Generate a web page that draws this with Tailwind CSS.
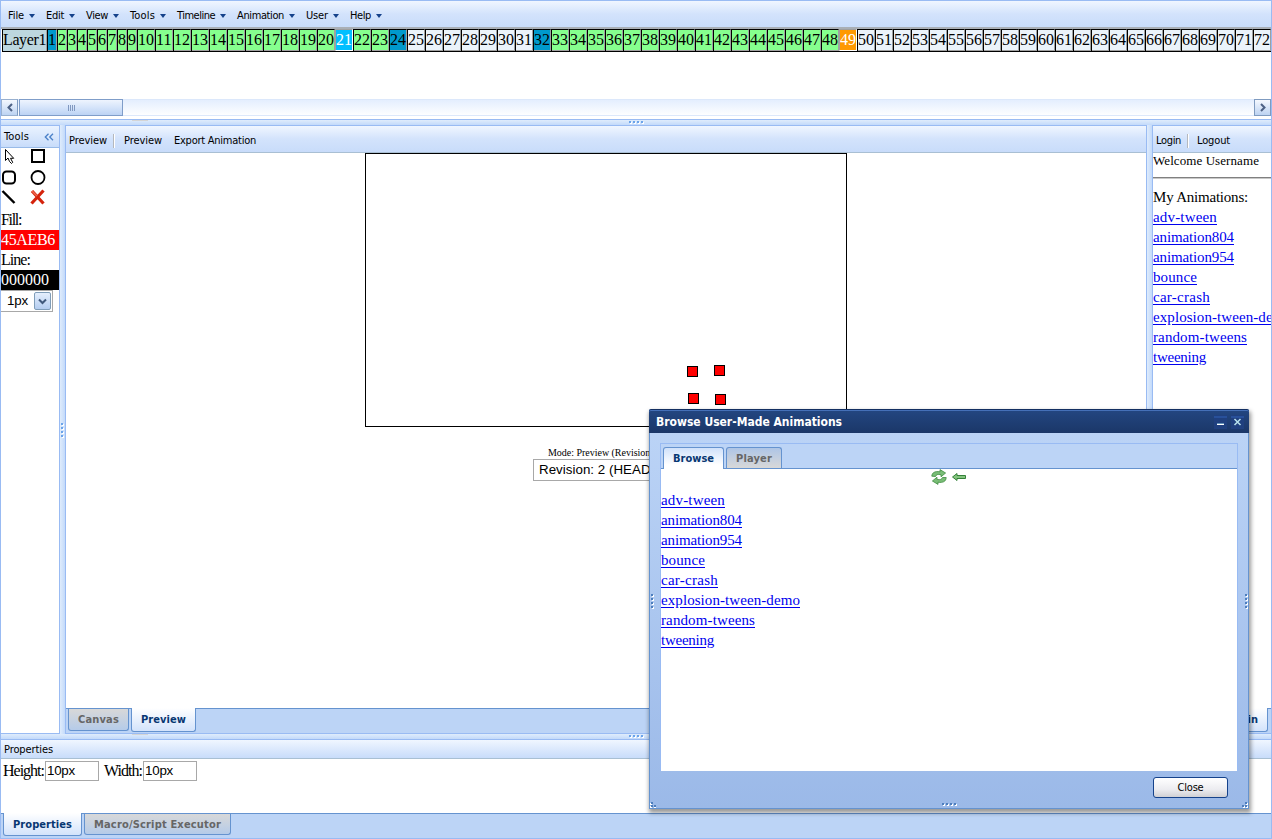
<!DOCTYPE html>
<html lang="en">
<head>
<meta charset="utf-8">
<title>Animation Editor</title>
<script src="https://cdn.jsdelivr.net/npm/@tailwindcss/browser@4"></script>
</head>
<body class="relative h-[839px] w-[1272px] overflow-hidden bg-white font-['DejaVu_Sans_Condensed','DejaVu_Sans',sans-serif] text-[11px] leading-[14px] text-black">
<div class="flex h-full flex-col border-x border-[#99bbf3]">

  <!-- Menu bar -->
  <nav class="flex h-[27px] shrink-0 items-center border-t border-[#99bbf3] bg-gradient-to-b from-[#f0f6ff] via-[#d3e3fc] via-50% to-[#c8dcfa] pt-[3px] pl-[7px]">
    <div class="flex w-[38px] items-center justify-between"><span data-w="16">File</span><i class="mr-[11px] border-x-3 border-t-4 border-x-transparent border-t-[#15428b]"></i></div>
    <div class="flex w-10 items-center justify-between"><span data-w="18">Edit</span><i class="mr-[11px] border-x-3 border-t-4 border-x-transparent border-t-[#15428b]"></i></div>
    <div class="flex w-11 items-center justify-between"><span data-w="22">View</span><i class="mr-[11px] border-x-3 border-t-4 border-x-transparent border-t-[#15428b]"></i></div>
    <div class="flex w-[47px] items-center justify-between"><span data-w="25">Tools</span><i class="mr-[11px] border-x-3 border-t-4 border-x-transparent border-t-[#15428b]"></i></div>
    <div class="flex w-[60px] items-center justify-between"><span data-w="38">Timeline</span><i class="mr-[11px] border-x-3 border-t-4 border-x-transparent border-t-[#15428b]"></i></div>
    <div class="flex w-[69px] items-center justify-between"><span data-w="47">Animation</span><i class="mr-[11px] border-x-3 border-t-4 border-x-transparent border-t-[#15428b]"></i></div>
    <div class="flex w-11 items-center justify-between"><span data-w="22">User</span><i class="mr-[11px] border-x-3 border-t-4 border-x-transparent border-t-[#15428b]"></i></div>
    <div class="flex w-[43px] items-center justify-between"><span data-w="21">Help</span><i class="mr-[11px] border-x-3 border-t-4 border-x-transparent border-t-[#15428b]"></i></div>
  </nav>

  <!-- Timeline -->
  <section class="flex h-[92px] shrink-0 flex-col justify-between border-t-2 border-[#a9afb6] bg-white pb-[3px]">
    <div id="frames" class="ml-px flex h-[23px] w-[1269px] overflow-hidden border-b border-black font-['Liberation_Serif',serif] text-[16px] leading-[20px]">
      <div class="w-[45px] shrink-0 border-t border-r border-l border-t-black border-r-[#a0a0a0] border-l-black bg-[#bdd7df]"><span data-w="43">Layer1</span></div>
    </div>
    <div class="flex h-[17px] justify-between border-y border-[#dce8fb] bg-gradient-to-b from-[#e4eefe] to-[#fdfeff]">
      <div class="flex">
        <div class="-my-px flex h-[17px] w-[17px] items-center justify-center border border-[#98b0d0] border-r-[#7f9bc0] bg-gradient-to-b from-[#f4f8fe] to-[#bdd3f2]"><svg width="8" height="9" viewBox="0 0 8 9"><path d="M6 1 2.5 4.5 6 8" fill="none" stroke="#4d6185" stroke-width="2"/></svg></div>
        <div class="-my-px ml-px flex h-[17px] w-[104px] items-center justify-center gap-px border border-[#7f9dc9] bg-gradient-to-b from-[#eef4fe] via-[#d5e4fa] to-[#bcd3f4]">
          <i class="h-[6px] w-px bg-[#8098c0]"></i><i class="h-[6px] w-px bg-[#8098c0]"></i><i class="h-[6px] w-px bg-[#8098c0]"></i><i class="h-[6px] w-px bg-[#8098c0]"></i>
        </div>
      </div>
      <div class="-my-px flex h-[17px] w-[17px] items-center justify-center border border-[#7f9bc0] bg-gradient-to-b from-[#f4f8fe] to-[#bdd3f2]"><svg width="8" height="9" viewBox="0 0 8 9"><path d="M2 1 5.5 4.5 2 8" fill="none" stroke="#4d6185" stroke-width="2"/></svg></div>
    </div>
  </section>

  <!-- Horizontal splitter -->
  <div class="flex h-[6px] shrink-0 border-t border-[#99bbf3] bg-gradient-to-b from-[#dfecfc] to-[#c3dafa]">
    <i class="ml-[131px] h-px w-4 bg-[#d5d5d5]"></i>
    <svg class="ml-[480px]" width="16" height="5" viewBox="0 0 16 5"><g fill="#fff"><path d="M2 2h2v2h-2zM6 2h2v2h-2zM10 2h2v2h-2zM14 2h2v2h-2z"/></g><g fill="#6ba4ea"><path d="M1 1h2v2h-2zM5 1h2v2h-2zM9 1h2v2h-2zM13 1h2v2h-2z"/></g></svg>
  </div>

  <main class="flex h-[609px] shrink-0">
    <!-- Tool palette -->
    <aside class="w-[59px] shrink-0 border-y border-r border-[#99bbf3]">
      <header class="flex h-[22px] items-center justify-between border-b border-[#99bbe8] bg-gradient-to-b from-[#eaf3ff] to-[#c8dcfa] pr-[5px] pl-[3px]"><span data-w="25">Tools</span><svg width="10" height="8" viewBox="0 0 10 8" fill="none" stroke="#4a80c8" stroke-width="1.3"><path d="M4.5.8 1.3 4l3.2 3.2M9 .8 5.8 4 9 7.2"/></svg></header>
      <div class="grid h-[62px] grid-cols-2 grid-rows-3">
        <svg width="18" height="20" viewBox="1 148 18 20"><path d="M5.5 149.5v11l2.5-2.5 1.5 3.5 2 2 1.2-1.2-2.2-4h3.2z" fill="#fff" stroke="#000"/></svg>
        <svg width="18" height="20" viewBox="30 148 18 20"><path d="M32 150h12v12h-12z" fill="#fff" stroke="#000" stroke-width="2"/></svg>
        <svg width="18" height="20" viewBox="1 168.500 18 20"><rect x="3" y="171" width="12" height="12" rx="3.500" fill="#fff" stroke="#000" stroke-width="2"/></svg>
        <svg width="18" height="20" viewBox="30 168.500 18 20"><circle cx="38" cy="177" r="6.500" fill="#fff" stroke="#000" stroke-width="1.800"/></svg>
        <svg width="18" height="20" viewBox="1 189 18 20"><path d="m2.500 191 12 12" stroke="#000" stroke-width="2.400"/></svg>
        <svg width="18" height="20" viewBox="30 189 18 20"><path d="m32 191 11.500 12.500M43.500 190.500 31.500 203.500" stroke="#d4230c" stroke-width="3.200"/><path d="m32 191 5 5" stroke="#ef6a50" stroke-width="1.500"/></svg>
      </div>
      <div class="font-['Liberation_Serif',serif] text-[16px] leading-5">
        <div><span data-w="20">Fill:</span></div>
        <div class="bg-[#ff0000] text-white"><span data-w="54">45AEB6</span></div>
        <div><span data-w="29">Line:</span></div>
        <div class="bg-black text-white"><span data-w="48">000000</span></div>
      </div>
      <div class="flex h-[22px] w-[52px] items-center justify-between border border-l-0 border-[#a8a8a8] pr-px pl-[6px] font-['Liberation_Sans',sans-serif] text-[13.330px]"><span data-w="21">1px</span><div class="flex h-[18px] w-[17px] items-center justify-center rounded-xs border border-[#7f9db9] bg-gradient-to-b from-[#e5effd] to-[#b4cdf0]"><svg width="9" height="7" viewBox="0 0 9 7"><path d="m1 1.500 3.500 3.500L8 1.500" fill="none" stroke="#40597c" stroke-width="2"/></svg></div></div>
    </aside>

    <div class="flex w-[5px] shrink-0 items-center bg-gradient-to-r from-[#dfecfc] to-[#c3dafa]"><svg width="5" height="16" viewBox="0 0 5 16"><path fill="#fff" d="M2 2h2v2h-2zM2 6h2v2h-2zM2 10h2v2h-2zM2 14h2v2h-2z"/><path fill="#6ba4ea" d="M1 1h2v2h-2zM1 5h2v2h-2zM1 9h2v2h-2zM1 13h2v2h-2z"/></svg></div>

    <!-- Stage -->
    <section class="flex w-[1082px] shrink-0 flex-col border border-[#99bbf3]">
      <div class="flex h-[27px] shrink-0 items-center border-b border-[#a9bfd3] bg-gradient-to-b from-[#f0f6ff] via-[#d3e3fc] via-50% to-[#c8dcfa] pt-[3px] pl-[3px]">
        <span data-w="38">Preview</span><i class="mr-[9px] ml-[6px] h-[14px] w-[2px] border-r border-l border-l-[#b5b8bd] border-r-white"></i><span data-w="38">Preview</span><span class="ml-3" data-w="82">Export Animation</span>
      </div>
      <div class="h-[555px] bg-white">
        <div class="relative ml-[299px] h-[274px] w-[482px] border border-black">
          <i class="absolute top-[212px] left-[321px] size-[11px] border border-black bg-[#ff0000]"></i>
          <i class="absolute top-[211px] left-[348px] size-[11px] border border-black bg-[#ff0000]"></i>
          <i class="absolute top-[239px] left-[322px] size-[11px] border border-black bg-[#ff0000]"></i>
          <i class="absolute top-[240px] left-[349px] size-[11px] border border-black bg-[#ff0000]"></i>
        </div>
        <p class="mt-5 ml-[482px] font-['Liberation_Serif',serif] text-[10px] leading-3 whitespace-nowrap"><span data-w="113">Mode: Preview (Revision 2)</span></p>
        <div class="ml-[467px] h-[22px] w-[148px] border border-[#a8a8a8] pl-[5px] font-['Liberation_Sans',sans-serif] text-[13.330px] leading-5 whitespace-nowrap"><span data-w="116">Revision: 2 (HEAD)</span></div>
      </div>
      <div class="flex h-[25px] border-t border-[#6593cf] bg-[#bcd4f6] pl-[2px] text-[11px] font-bold">
        <div class="h-[22px] w-[61px] rounded-b-[3px] border border-t-0 border-[#6593cf] bg-gradient-to-b from-[#d8d8d8] to-[#b5cbe9] pt-1 text-center text-[#666]"><span data-w="41">Canvas</span></div>
        <div class="-mt-px ml-[2px] h-6 w-[65px] rounded-b-[3px] border border-t-0 border-[#6593cf] bg-gradient-to-b from-white to-[#d3e3fb] pt-[5px] text-center text-[#083772]"><span data-w="45">Preview</span></div>
      </div>
    </section>

    <div class="w-[5px] shrink-0 bg-gradient-to-r from-[#dfecfc] to-[#c3dafa]"></div>

    <!-- Account panel -->
    <aside class="flex w-[119px] shrink-0 flex-col overflow-hidden border-y border-l border-[#99bbf3]">
      <div class="flex h-[27px] shrink-0 items-center border-b border-[#a9bfd3] bg-gradient-to-b from-[#f0f6ff] via-[#d3e3fc] via-50% to-[#c8dcfa] pt-[3px] pl-[3px]"><span data-w="25">Login</span><i class="mr-[8px] ml-[6px] h-[14px] w-[2px] border-r border-l border-l-[#b5b8bd] border-r-white"></i><span data-w="33">Logout</span></div>
      <div class="h-[555px] font-['Liberation_Serif',serif] text-[15px] leading-5 whitespace-nowrap">
        <p class="h-6 text-[13px] leading-[15px]"><span data-w="106">Welcome Username</span></p>
        <hr class="mb-[8px] h-[2px] border-t border-b border-t-[#808080] border-b-[#c8c8c8]">
        <p><span data-w="95">My Animations:</span></p>
        <div class="flex flex-col items-start text-[#0000ee] underline-offset-2 [&>a]:underline">
          <a data-w="64">adv-tween</a><a data-w="81">animation804</a><a data-w="81">animation954</a><a data-w="44">bounce</a><a data-w="57">car-crash</a><a data-w="139">explosion-tween-demo</a><a data-w="94">random-tweens</a><a data-w="53">tweening</a>
        </div>
      </div>
      <div class="flex h-[25px] border-t border-[#6593cf] bg-[#bcd4f6] pl-[60px] font-bold"><div class="-mt-px h-6 w-[55px] rounded-b-[3px] border border-t-0 border-[#6593cf] bg-gradient-to-b from-white to-[#d3e3fb] pt-[5px] pr-[9px] text-right text-[#083772]">Main</div></div>
    </aside>
  </main>

  <!-- Horizontal splitter -->
  <div class="flex h-[5px] shrink-0 bg-gradient-to-b from-[#dfecfc] to-[#c3dafa]">
    <i class="ml-[131px] h-px w-4 bg-[#d5d5d5]"></i>
    <svg class="ml-[480px]" width="16" height="5" viewBox="0 0 16 5"><path fill="#fff" d="M2 2h2v2h-2zM6 2h2v2h-2zM10 2h2v2h-2zM14 2h2v2h-2z"/><path fill="#6ba4ea" d="M1 1h2v2h-2zM5 1h2v2h-2zM9 1h2v2h-2zM13 1h2v2h-2z"/></svg>
  </div>

  <!-- Properties -->
  <section class="flex h-[100px] shrink-0 flex-col border-y border-[#99bbf3]">
    <header class="h-[19px] shrink-0 border-b border-[#a9bfd3] bg-gradient-to-b from-[#f0f6ff] to-[#c8dcfa] pt-[3px] pl-[3px]"><span data-w="49">Properties</span></header>
    <div class="flex h-[54px] items-start pt-[2px] pl-[2px] font-['Liberation_Serif',serif] text-[16px] leading-5">
      <span data-w="41">Height:</span><div class="ml-px h-5 w-[54px] border border-[#a8a8a8] pl-px font-['Liberation_Sans',sans-serif] text-[13.330px] leading-[18px]"><span data-w="28">10px</span></div>
      <span class="ml-[5px]" data-w="38">Width:</span><div class="ml-px h-5 w-[54px] border border-[#a8a8a8] pl-px font-['Liberation_Sans',sans-serif] text-[13.330px] leading-[18px]"><span data-w="28">10px</span></div>
    </div>
    <div class="flex h-[25px] border-t border-[#6593cf] bg-[#bcd4f6] pl-[2px] font-bold">
      <div class="-mt-px h-[23px] w-[79px] rounded-b-[3px] border border-t-0 border-[#6593cf] bg-gradient-to-b from-white to-[#d3e3fb] pt-[5px] text-center text-[#083772]"><span data-w="59">Properties</span></div>
      <div class="ml-[2px] h-[21px] w-[147px] rounded-b-[3px] border border-t-0 border-[#6593cf] bg-gradient-to-b from-[#d8d8d8] to-[#b5cbe9] pt-1 text-center text-[#666]"><span data-w="127">Macro/Script Executor</span></div>
    </div>
  </section>
</div>

<!-- Browse dialog -->
<div class="absolute top-[409px] left-[649px] flex h-[400px] w-[600px] flex-col rounded-t-[2px] border border-t-0 border-[#6593cf] bg-gradient-to-b from-[#bdd5f7] to-[#9bb9e8] shadow-[1px_3px_4px_1px_rgba(0,0,0,0.4)]">
  <header class="-mx-px flex h-6 shrink-0 items-center justify-between rounded-t-[2px] border-t border-[#132f61] bg-gradient-to-b from-[#234681] to-[#1b3768] pr-[5px] pl-[7px] shadow-[inset_0_1px_0_#4570b8]">
    <b class="text-[12px] text-white" data-w="186">Browse User-Made Animations</b>
    <div class="flex gap-1">
      <svg width="13" height="14" viewBox="0 0 13 14"><path fill="#20407f" d="M0 0h13v14H0z"/><path fill="#28509a" d="M0 1h13v2H0z"/><path fill="#fff" d="M3 8h7v2H3z"/><path fill="#6593b8" d="M3 8h7v1H3z"/></svg>
      <svg width="13" height="14" viewBox="0 0 13 14"><path fill="#20407f" d="M0 0h13v14H0z"/><path fill="#28509a" d="M0 1h13v2H0z"/><path d="m3.500 4 6 6m0-6-6 6" stroke="#b9e3ee" stroke-width="1.500"/></svg>
    </div>
  </header>
  <div class="mx-[10px] mt-[10px] flex h-[328px] shrink-0 flex-col border-x border-t border-[#99bbf3]">
    <div class="flex h-[25px] shrink-0 items-end border-b border-[#6593cf] bg-[#bcd4f6] pl-[2px] font-bold">
      <div class="-mb-px h-[22px] w-[61px] rounded-t-[3px] border border-b-0 border-[#6593cf] bg-gradient-to-b from-[#d0e1fa] to-white to-80% pt-1 text-center text-[#083772]"><span data-w="41">Browse</span></div>
      <div class="ml-[2px] h-[21px] w-[56px] rounded-t-[3px] border border-b-0 border-[#6593cf] bg-gradient-to-b from-[#aec5e6] to-[#d8d8d8] pt-1 text-center text-[#666]"><span data-w="36">Player</span></div>
    </div>
    <div class="grow bg-white">
      <div class="flex h-[21px] justify-center gap-1 pr-[1px]">
        <svg width="16" height="16" viewBox="0 0 16 16" stroke="#3f8b40" stroke-width=".8" fill="#79bd76"><path d="M.8 7.200C1 3.500 4 2 9 2.800V.6L14.600 4 10 7.800V5.700C6.500 5 5.500 5.500 4.500 7.500z"/><path d="M15.200 8.500C15 12.500 12 14 7 13.200v2.200L1.400 12 6 8.200v2.200c3.500.6 4.500.1 5.500-1.900z"/></svg>
        <svg width="16" height="16" viewBox="0 0 16 16"><path d="M1.500 8 6 4.500v2h8.500v3H6v2z" fill="#84c47e" stroke="#35813a"/></svg>
      </div>
      <div class="flex flex-col items-start font-['Liberation_Serif',serif] text-[15px] leading-5 text-[#0000ee] underline-offset-2 [&>a]:underline">
        <a data-w="64">adv-tween</a><a data-w="81">animation804</a><a data-w="81">animation954</a><a data-w="44">bounce</a><a data-w="57">car-crash</a><a data-w="139">explosion-tween-demo</a><a data-w="94">random-tweens</a><a data-w="53">tweening</a>
      </div>
    </div>
  </div>
  <div class="flex justify-end pt-[6px] pr-5"><button class="h-[21px] w-[75px] rounded-[3px] border border-[#15428b] bg-gradient-to-b from-white via-[#ececf0] via-60% to-[#d0d0d4]"><span data-w="26">Close</span></button></div>
  <svg class="absolute top-[184px] left-0" width="4" height="17" viewBox="0 0 4 17"><path fill="#fff" d="M2 2h2v2h-2zM2 6h2v2h-2zM2 10h2v2h-2zM2 14h2v2h-2z"/><path fill="#4d7ebd" d="M1 1h2v2h-2zM1 5h2v2h-2zM1 9h2v2h-2zM1 13h2v2h-2z"/></svg>
  <svg class="absolute top-[184px] right-0" width="4" height="17" viewBox="0 0 4 17"><path fill="#fff" d="M2 2h2v2h-2zM2 6h2v2h-2zM2 10h2v2h-2zM2 14h2v2h-2z"/><path fill="#4d7ebd" d="M1 1h2v2h-2zM1 5h2v2h-2zM1 9h2v2h-2zM1 13h2v2h-2z"/></svg>
  <svg class="absolute bottom-px left-[291px]" width="17" height="4" viewBox="0 0 17 4"><path fill="#fff" d="M2 1h2v2h-2zM6 1h2v2h-2zM10 1h2v2h-2zM14 1h2v2h-2z"/><path fill="#4d7ebd" d="M1 0h2v2h-2zM5 0h2v2h-2zM9 0h2v2h-2zM13 0h2v2h-2z"/></svg>
  <svg class="absolute bottom-0 left-0" width="6" height="6" viewBox="0 0 6 6"><path fill="#fff" d="M0 1h2v2H0zM0 4h2v2H0zM4 4h2v2H4z"/><path fill="#4d7ebd" d="M1 0h2v2H1zM1 3h2v2H1zM4 3h2v2H4z"/></svg>
  <svg class="absolute right-0 bottom-0" width="6" height="6" viewBox="0 0 6 6"><path fill="#fff" d="M4 1h2v2H4zM1 4h2v2H1zM4 4h2v2H4z"/><path fill="#4d7ebd" d="M3 0h2v2H3zM0 3h2v2H0zM3 3h2v2H3z"/></svg>
</div>

<script>
// Timeline frames: keyframes, tweened frames, the playhead and the end marker.
const frames = document.getElementById('frames');
const plain = 'border-t border-r border-l border-t-black border-r-[#a0a0a0] border-l-black shadow-[inset_0_-1px_0_#a0a0a0] ';
const marked = 'border border-t-[#a0a0a0] border-l-[#a0a0a0] border-r-white border-b-white text-white ';
for (let n = 1; n <= 72; n++) {
  const cell = document.createElement('div');
  cell.textContent = n;
  let look;
  if (n === 21) look = marked + 'bg-[#00bfff]';
  else if (n === 49) look = marked + 'bg-[#ff9900]';
  else if (n === 1 || n === 24 || n === 32) look = plain + 'bg-[#0099cc]';
  else if (n < 49) look = plain + 'bg-[#86ff8e]';
  else look = plain + 'bg-[#ebf3fa]';
  if (n > 24 && n < 32) look = plain + 'bg-[#ebf3fa]';
  cell.className = 'shrink-0 ' + (n < 10 ? 'w-[10px] ' : 'w-[18px] ') + look;
  frames.append(cell);
}
// Track each label so that it takes its nominal width, once styles and fonts are ready.
function fitLabels() {
  for (const el of document.querySelectorAll('[data-w]')) {
    el.style.whiteSpace = 'nowrap';
    el.style.letterSpacing = '0px';
    const range = document.createRange();
    range.selectNodeContents(el);
    const spare = Number(el.dataset.w) - range.getBoundingClientRect().width;
    el.style.letterSpacing = spare / el.textContent.length + 'px';
  }
}
fitLabels();
addEventListener('load', () => {
  fitLabels();
  requestAnimationFrame(fitLabels);
  document.fonts.ready.then(fitLabels);
});
</script>
</body>
</html>
